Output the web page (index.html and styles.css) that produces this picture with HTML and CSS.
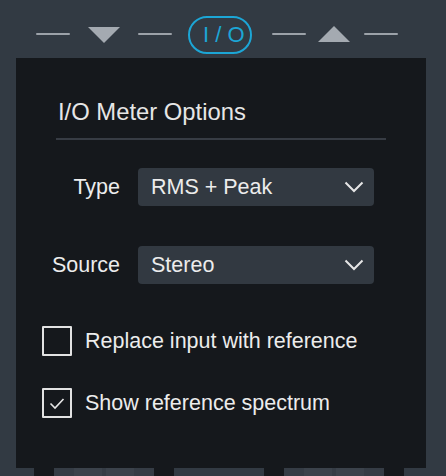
FILE: index.html
```html
<!DOCTYPE html>
<html>
<head>
<meta charset="utf-8">
<link rel="stylesheet" href="styles.css">
</head>
<body>
<div class="page">
  <header class="header">
    <span class="dash d1"></span>
    <svg class="tri tri-down" width="32" height="16" viewBox="0 0 32 16"><polygon points="0,0 32,0 16,16" fill="#a4aab1"/></svg>
    <span class="dash d2"></span>
    <div class="pill">I / O</div>
    <span class="dash d3"></span>
    <svg class="tri tri-up" width="32" height="16" viewBox="0 0 32 16"><polygon points="16,0 32,16 0,16" fill="#a4aab1"/></svg>
    <span class="dash d4"></span>
  </header>

  <section class="panel">
    <h1 class="title">I/O Meter Options</h1>
    <div class="sep"></div>

    <div class="fields">
      <label class="flabel">Type</label>
      <div class="select"><span>RMS + Peak</span>
        <svg class="chev" width="20" height="12" viewBox="0 0 20 12"><polyline points="1.5,1.5 10,10 18.5,1.5" fill="none" stroke="#e6e6e6" stroke-width="2"/></svg>
      </div>
      <label class="flabel">Source</label>
      <div class="select"><span>Stereo</span>
        <svg class="chev" width="20" height="12" viewBox="0 0 20 12"><polyline points="1.5,1.5 10,10 18.5,1.5" fill="none" stroke="#e6e6e6" stroke-width="2"/></svg>
      </div>
    </div>

    <div class="checks">
      <div class="check">
        <span class="box"></span>
        <span class="clabel">Replace input with reference</span>
      </div>
      <div class="check">
        <span class="box"><svg width="26" height="26" viewBox="0 0 26 26"><polyline points="6.5,13.5 11,18 19.5,9" fill="none" stroke="#e6e6e6" stroke-width="1.6"/></svg></span>
        <span class="clabel">Show reference spectrum</span>
      </div>
    </div>
  </section>

  <div class="strip">
    <span class="s bg" style="width:34px"></span>
    <span class="s dk" style="width:20px"></span>
    <span class="s md" style="width:20px"></span>
    <span class="s lt" style="width:28px"></span>
    <span class="s md" style="width:4px"></span>
    <span class="s lt" style="width:28px"></span>
    <span class="s md" style="width:20px"></span>
    <span class="s dk" style="width:20px"></span>
    <span class="s bg" style="width:90px"></span>
    <span class="s dk" style="width:20px"></span>
    <span class="s md" style="width:20px"></span>
    <span class="s lt" style="width:28px"></span>
    <span class="s md" style="width:4px"></span>
    <span class="s lt" style="width:28px"></span>
    <span class="s md" style="width:20px"></span>
    <span class="s dk" style="width:20px"></span>
    <span class="s bg" style="width:42px"></span>
  </div>
</div>
</body>
</html>
```

FILE: styles.css
```css
html, body {
  margin: 0;
  padding: 0;
  background: #323a43;
}
body {
  width: 446px;
  height: 476px;
  overflow: hidden;
  font-family: "Liberation Sans", Arial, sans-serif;
  color: #e8e8e8;
}
.page {
  display: flex;
  flex-direction: column;
  width: 446px;
  height: 476px;
}
.header {
  height: 46px;
  padding-top: 12px;
  padding-left: 36px;
  display: flex;
  align-items: center;
}
.dash {
  display: block;
  width: 34px;
  height: 2px;
  background: #9ca2a9;
  border-radius: 1px;
  margin-top: -2px;
}
.tri { display: block; }
.tri-down { margin-left: 18px; }
.d2 { margin-left: 18px; }
.pill {
  margin-left: 16px;
  box-sizing: border-box;
  width: 64px;
  height: 38px;
  border: 2px solid #1ca6d6;
  border-radius: 19px;
  color: #1ca6d6;
  font-size: 22px;
  line-height: 34px;
  padding-left: 13px;
  white-space: pre;
}
.d3 { margin-left: 20px; }
.tri-up { margin-left: 12px; margin-top: -2px; }
.d4 { margin-left: 14px; }

.panel {
  margin-left: 16px;
  width: 410px;
  height: 410px;
  box-sizing: border-box;
  background: #15181c;
  padding-top: 40px;
}
.title {
  margin: 0 0 0 42px;
  font-size: 23.8px;
  font-weight: normal;
  line-height: 27px;
  color: #e6e6e6;
}
.sep {
  margin: 13px 40px 0 40px;
  height: 2px;
  background: #373c44;
}
.fields {
  margin-top: 28px;
  margin-left: 24px;
  display: grid;
  grid-template-columns: 80px 236px;
  column-gap: 18px;
  row-gap: 40px;
  align-items: center;
}
.flabel {
  text-align: right;
  font-size: 21.5px;
  color: #ececec;
}
.select {
  height: 38px;
  box-sizing: border-box;
  background: #323941;
  border-radius: 4px;
  display: flex;
  align-items: center;
  justify-content: space-between;
  padding: 0 10px 0 13px;
  font-size: 21.5px;
  color: #ececec;
}
.chev { display: block; }
.checks {
  margin-top: 42px;
  margin-left: 26px;
  display: flex;
  flex-direction: column;
  gap: 32px;
}
.check {
  display: flex;
  align-items: center;
  gap: 13px;
}
.box {
  box-sizing: border-box;
  width: 30px;
  height: 30px;
  border: 2px solid #e2e2e2;
  border-radius: 1px;
  display: block;
}
.box svg { display: block; }
.clabel {
  font-size: 21.5px;
  color: #ececec;
}
.strip {
  display: flex;
  height: 8px;
}
.s { display: block; height: 8px; flex: none; }
.bg { background: #323a43; }
.dk { background: #15181c; }
.md { background: #353c45; }
.lt { background: #3b424b; }
```
